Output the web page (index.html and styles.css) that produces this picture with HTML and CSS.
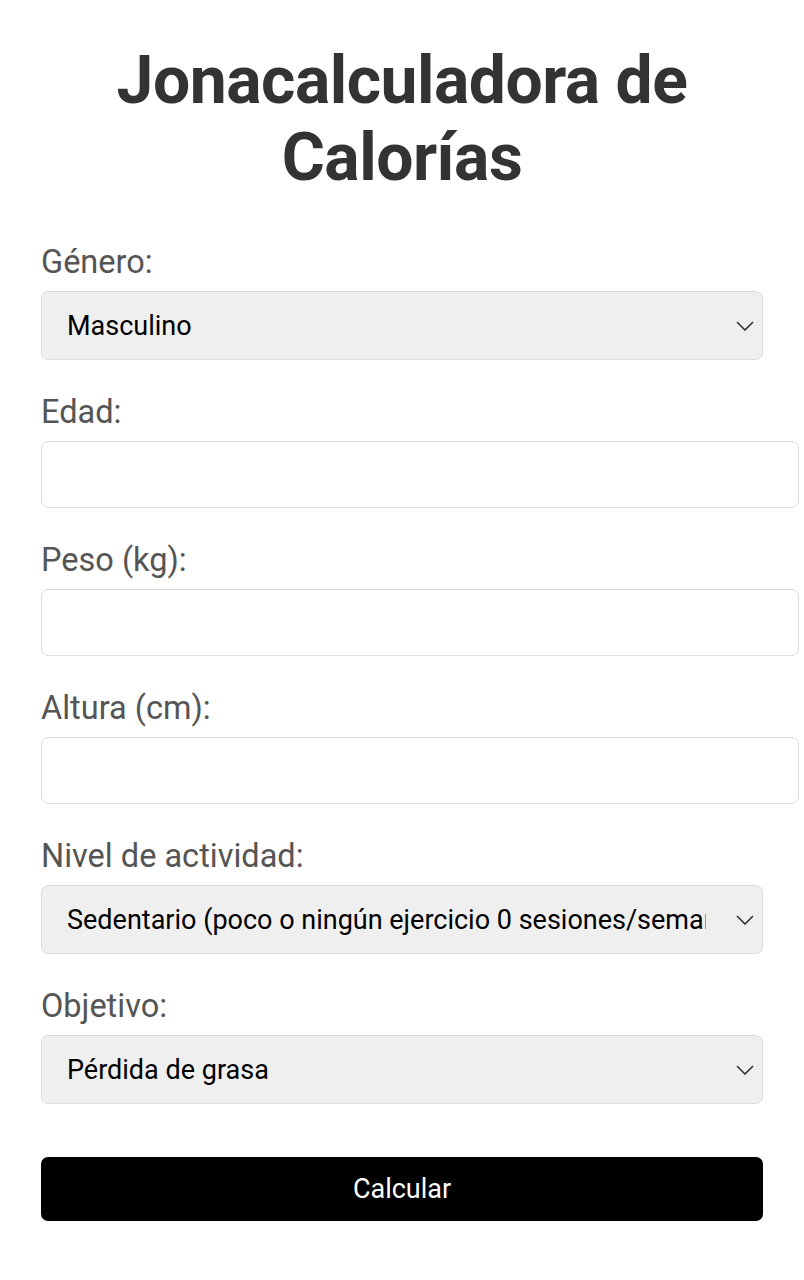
FILE: index.html
```html
<!DOCTYPE html>
<html lang="es">
  <head>
    <meta charset="UTF-8" />
    <meta name="viewport" content="width=device-width, initial-scale=1.0" />
    <title>Jonacalculadora de Calorías</title>
    <link rel="stylesheet" href="styles.css">
  </head>
  <body>
    <main class="container">
      <h1>Jonacalculadora de Calorías</h1>

      <form id="calorieForm" class="calc-form">
        <div class="field">
          <label for="gender">Género:</label>
          <div class="select-wrap">
            <select id="gender">
              <option>Masculino</option>
              <option>Femenino</option>
            </select>
            <svg class="chevron" viewBox="0 0 18 10" width="18" height="10"><path d="M1 1l8 8 8-8" fill="none" stroke="#333" stroke-width="1.6"/></svg>
          </div>
        </div>

        <div class="field">
          <label for="age">Edad:</label>
          <input id="age" type="number" />
        </div>

        <div class="field">
          <label for="weight">Peso (kg):</label>
          <input id="weight" type="number" />
        </div>

        <div class="field">
          <label for="height">Altura (cm):</label>
          <input id="height" type="number" />
        </div>

        <div class="field">
          <label for="activity">Nivel de actividad:</label>
          <div class="select-wrap">
            <select id="activity">
              <option>Sedentario (poco o ningún ejercicio 0 sesiones/semana)</option>
              <option>Ligero (1-3 sesiones/semana)</option>
              <option>Moderado (3-5 sesiones/semana)</option>
              <option>Intenso (6-7 sesiones/semana)</option>
            </select>
            <svg class="chevron" viewBox="0 0 18 10" width="18" height="10"><path d="M1 1l8 8 8-8" fill="none" stroke="#333" stroke-width="1.6"/></svg>
          </div>
        </div>

        <div class="field">
          <label for="goal">Objetivo:</label>
          <div class="select-wrap">
            <select id="goal">
              <option>Pérdida de grasa</option>
              <option>Mantenimiento</option>
              <option>Ganancia muscular</option>
            </select>
            <svg class="chevron" viewBox="0 0 18 10" width="18" height="10"><path d="M1 1l8 8 8-8" fill="none" stroke="#333" stroke-width="1.6"/></svg>
          </div>
        </div>

        <button type="submit" class="btn-calc">Calcular</button>
      </form>
    </main>
  </body>
</html>
```

FILE: styles.css
```css
body { font-family: Roboto, "Noto Sans", Arial, sans-serif; margin: 0; padding: 0; background: #fff; color: #333; }
.container { padding: 42px 41px 40px; }
h1 { margin: 0 0 48px; font-size: 66px; line-height: 77px; font-weight: 700; letter-spacing: -0.5px; text-align: center; color: #333; }

.field { margin-bottom: 34px; }
.field label { display: block; font-size: 32.5px; line-height: 36px; margin-bottom: 11px; color: #555; }

.select-wrap { position: relative; }
.select-wrap select {
  appearance: none;
  -webkit-appearance: none;
  display: block;
  width: 100%;
  height: 69px;
  box-sizing: border-box;
  padding: 0 56px 0 25px;
  font-family: inherit;
  font-size: 27px;
  color: #000;
  background: #efefef;
  border: 1px solid #dcdcdc;
  border-radius: 7px;
}
.chevron { position: absolute; right: 9px; top: 30px; pointer-events: none; }

.field input {
  display: block;
  width: 100%;
  height: 31px;
  padding: 17px;
  font-family: inherit;
  font-size: 27px;
  background: #fff;
  border: 1px solid #dcdcdc;
  border-radius: 7px;
}

.btn-calc {
  display: block;
  width: 100%;
  height: 64px;
  margin-top: 53px;
  background: #000;
  color: #fff;
  border: none;
  border-radius: 7px;
  font-family: inherit;
  font-size: 27px;
  cursor: pointer;
}
```
